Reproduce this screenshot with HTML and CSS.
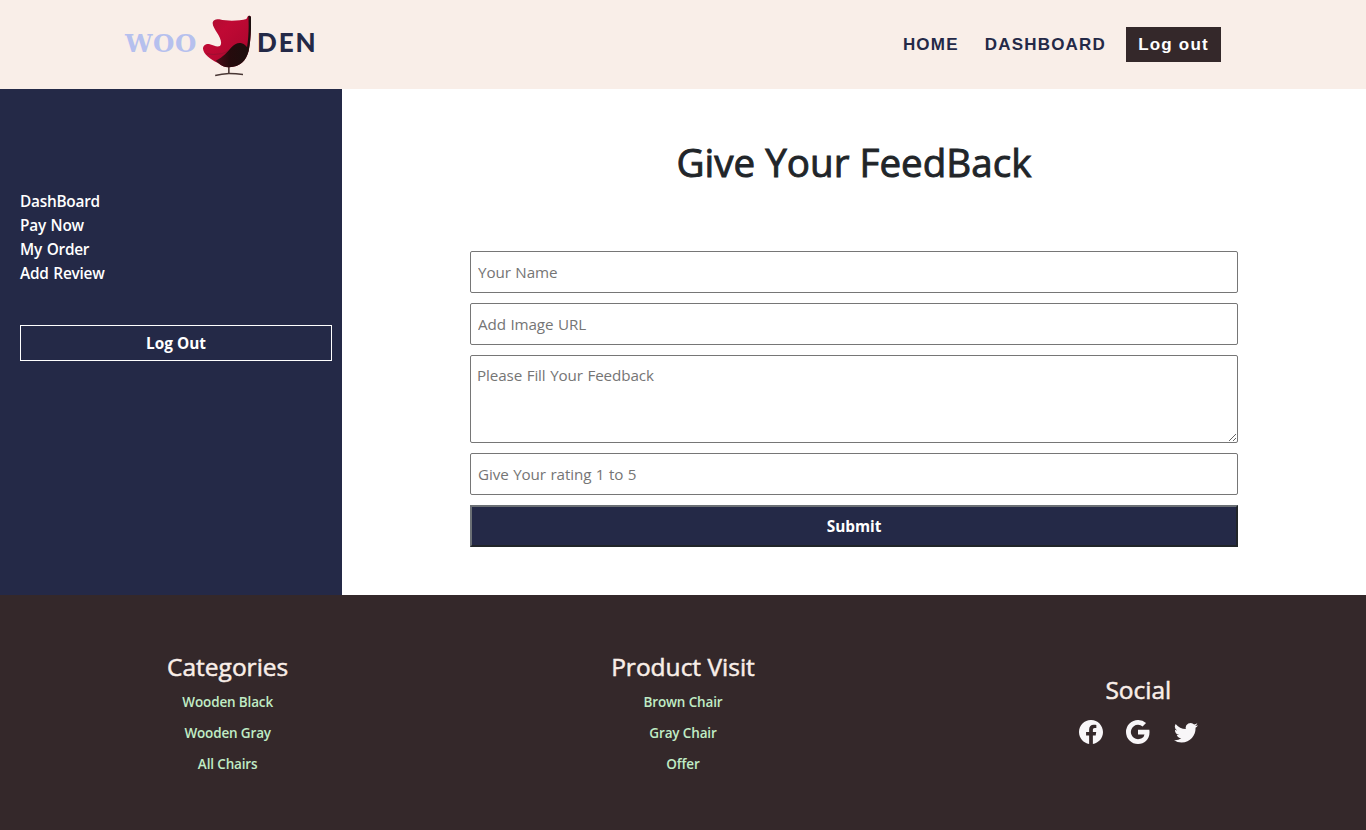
FILE: index.html
```html
<!DOCTYPE html>
<html lang="en">
<head>
<meta charset="utf-8">
<title>Wooden - Add Review</title>
<link rel="stylesheet" href="styles.css">
</head>
<body>
<header class="header">
  <a class="brand">
    <span class="brand-woo">WOO</span>
    <svg class="brand-chair" viewBox="24 20 144 186">
      <defs>
        <linearGradient id="red" x1="0" y1="0" x2="1" y2="1"><stop offset="0" stop-color="#a80f30"/><stop offset=".35" stop-color="#c00934"/><stop offset=".7" stop-color="#b10730"/><stop offset="1" stop-color="#6d0a20"/></linearGradient>
        <linearGradient id="dark" x1="0" y1="0" x2="1" y2="0"><stop offset="0" stop-color="#4d0c19"/><stop offset=".4" stop-color="#260b0d"/><stop offset="1" stop-color="#1c0f0e"/></linearGradient>
      </defs>
      <path d="M99 172h5v24h-5z" fill="#55403e"/>
      <path d="M60 199q20-5 42-6q22 0 42 3v5q-22-3-42-3q-22 1-41 6z" fill="#493735"/>
      <path d="M159 23q8-3 9 4c1 34-1 72-7 101c-8 30-26 47-58 49c-14 0-24-5-34-13C43 151 26 137 24 121c0-9 8-15 18-14c13 4 24 10 33 6c8-9 0-25-8-38c-7-12-14-22-14-30c0-9 9-13 20-12c29 7 62 4 81-1z" fill="url(#red)"/>
      <path d="M62 157C86 145 96 131 108 118c10-10 21-16 32-13c9 3 14 8 16 12c5-28 6-65 4-94q7-3 8 4c1 34-1 72-7 101c-8 30-26 47-58 49c-16 0-28-7-41-20z" fill="url(#dark)"/>
      <path d="M35 136q18 5 45 0q12-3 20-10" fill="none" stroke="#8c1230" stroke-width="2"/>
    </svg>
    <span class="brand-den">DEN</span>
  </a>
  <nav class="nav">
    <a class="nav-home">HOME</a>
    <a class="nav-dash">DASHBOARD</a>
    <button class="nav-logout">Log out</button>
  </nav>
</header>
<main class="main">
  <aside class="sidebar">
    <a>DashBoard</a>
    <a>Pay Now</a>
    <a>My Order</a>
    <a>Add Review</a>
    <button class="side-logout">Log Out</button>
  </aside>
  <section class="content">
    <h1 class="title">Give Your FeedBack</h1>
    <form class="form">
      <input class="field" placeholder="Your Name">
      <input class="field" placeholder="Add Image URL">
      <textarea class="field area" placeholder="Please Fill Your Feedback"></textarea>
      <input class="field" placeholder="Give Your rating 1 to 5">
      <button class="submit" type="button">Submit</button>
    </form>
  </section>
</main>
<footer class="footer">
  <div class="col">
    <h2 class="col-title">Categories</h2>
    <a class="link">Wooden Black</a>
    <a class="link">Wooden Gray</a>
    <a class="link">All Chairs</a>
  </div>
  <div class="col">
    <h2 class="col-title">Product Visit</h2>
    <a class="link">Brown Chair</a>
    <a class="link">Gray Chair</a>
    <a class="link">Offer</a>
  </div>
  <div class="col">
    <h2 class="col-title social-title">Social</h2>
    <div class="social">
      <svg class="icon" viewBox="0 0 16 16"><path d="M16 8.049c0-4.446-3.582-8.05-8-8.05C3.58 0-.002 3.603-.002 8.05c0 4.017 2.926 7.347 6.75 7.951v-5.625h-2.03V8.05H6.75V6.275c0-2.017 1.195-3.131 3.022-3.131.876 0 1.791.157 1.791.157v1.98h-1.009c-.993 0-1.303.621-1.303 1.258v1.51h2.218l-.354 2.326H9.25V16c3.824-.604 6.75-3.934 6.75-7.951z"/></svg>
      <svg class="icon" viewBox="0 0 16 16"><path d="M15.545 6.558a9.42 9.42 0 0 1 .139 1.626c0 2.434-.87 4.492-2.384 5.885h.002C11.978 15.292 10.158 16 8 16A8 8 0 1 1 8 0a7.689 7.689 0 0 1 5.352 2.082l-2.284 2.284A4.347 4.347 0 0 0 8 3.166c-2.087 0-3.86 1.408-4.492 3.304a4.792 4.792 0 0 0 0 3.063h.003c.635 1.893 2.405 3.301 4.492 3.301 1.078 0 2.004-.276 2.722-.764h-.003a3.702 3.702 0 0 0 1.599-2.431H8v-3.08h7.545z"/></svg>
      <svg class="icon" viewBox="0 0 16 16"><path d="M5.026 15c6.038 0 9.341-5.003 9.341-9.334 0-.14 0-.282-.006-.422A6.685 6.685 0 0 0 16 3.542a6.658 6.658 0 0 1-1.889.518 3.301 3.301 0 0 0 1.447-1.817 6.533 6.533 0 0 1-2.087.793A3.286 3.286 0 0 0 7.875 6.03a9.325 9.325 0 0 1-6.767-3.429 3.289 3.289 0 0 0 1.018 4.382A3.323 3.323 0 0 1 .64 6.575v.045a3.288 3.288 0 0 0 2.632 3.218 3.203 3.203 0 0 1-.865.115 3.23 3.23 0 0 1-.614-.057 3.283 3.283 0 0 0 3.067 2.277A6.588 6.588 0 0 1 .78 13.58a6.32 6.32 0 0 1-.78-.045A9.344 9.344 0 0 0 5.026 15z"/></svg>
    </div>
  </div>
</footer>
</body>
</html>
```

FILE: styles.css
```css
* { box-sizing: border-box; }
body { margin: 0; height: 830px; overflow: hidden; display: flex; flex-direction: column; background: #fff; color: #212529; font: 16px/24px "Open Sans", "Noto Sans", sans-serif; }
button, input, textarea { font: inherit; margin: 0; }
h1, h2 { margin: 0; font-weight: 400; -webkit-text-stroke: .5px currentColor; }

.header { height: 89px; flex: none; display: flex; justify-content: space-between; align-items: center; padding: 0 145px 0 125px; background: #f9eee8; }
.brand { display: flex; align-items: center; height: 86px; }
.brand-woo { width: 78px; padding-bottom: 1px; font: bold 24.5px/30px "DejaVu Serif", serif; color: #b6c0ee; letter-spacing: .6px; }
.brand-chair { width: 48px; height: 62px; margin-top: 2px; }
.brand-den { padding: 0 0 6px 6px; font: 900 26px/30px Lato, sans-serif; color: #242947; letter-spacing: 1.9px; margin-right: -2px; }
.nav { display: flex; align-items: center; font: bold 17px/24px "Liberation Sans", sans-serif; letter-spacing: 1.2px; color: #242947; }
.nav-home { margin-right: 26px; }
.nav-dash { margin-right: 20px; }
.nav-logout { width: 95px; height: 35px; padding: 0; border: 0; background: #34282a; color: #fff; letter-spacing: 1.2px; }

.main { height: 506px; flex: none; display: flex; }
.sidebar { width: 342px; padding: 101px 10px 0 20px; display: flex; flex-direction: column; background: #242947; color: #fff; font-size: 15.4px; font-weight: 600; letter-spacing: -.25px; word-spacing: 1px; }
.side-logout { height: 36px; margin-top: 39px; padding: 2px 0 0; border: 1px solid #fff; background: transparent; color: #fff; font-weight: 700; letter-spacing: 0; }
.content { flex: 1; display: flex; flex-direction: column; align-items: center; padding-top: 49px; }
.title { font-size: 38.6px; line-height: 48px; -webkit-text-stroke-width: .9px; }
.form { width: 768px; margin-top: 65px; display: flex; flex-direction: column; gap: 10px; }
.field { height: 42px; padding: 0 7px; border: 1px solid #767676; border-radius: 2px; background: #fff; font-size: 15.2px; letter-spacing: -.1px; word-spacing: .7px; }
.field::placeholder { color: #757575; opacity: 1; }
.area { height: 88px; padding: 7px 6px; resize: vertical; }
.submit { height: 42px; padding: 2px 0 0; border: 2px solid; border-color: #6b7075 #212529 #212529 #6b7075; background: #242947; color: #fff; font-size: 15.4px; font-weight: 700; letter-spacing: -.05px; }

.footer { flex: 1; display: grid; grid-template-columns: repeat(3, 1fr); background: #34282a; }
.col { display: flex; flex-direction: column; align-items: center; padding-top: 57px; color: #f9eee8; }
.col-title { margin-bottom: 20px; font-size: 24.5px; line-height: 30px; height: 15px; flex: none; }
.link { font-size: 13.5px; font-weight: 600; line-height: 31px; color: #c0ecc5; letter-spacing: -.15px; }
.social-title { margin-top: 23px; margin-bottom: 30px; }
.social { display: flex; gap: 23.5px; }
.icon { width: 24px; height: 24px; fill: #f8f6f8; }
```
